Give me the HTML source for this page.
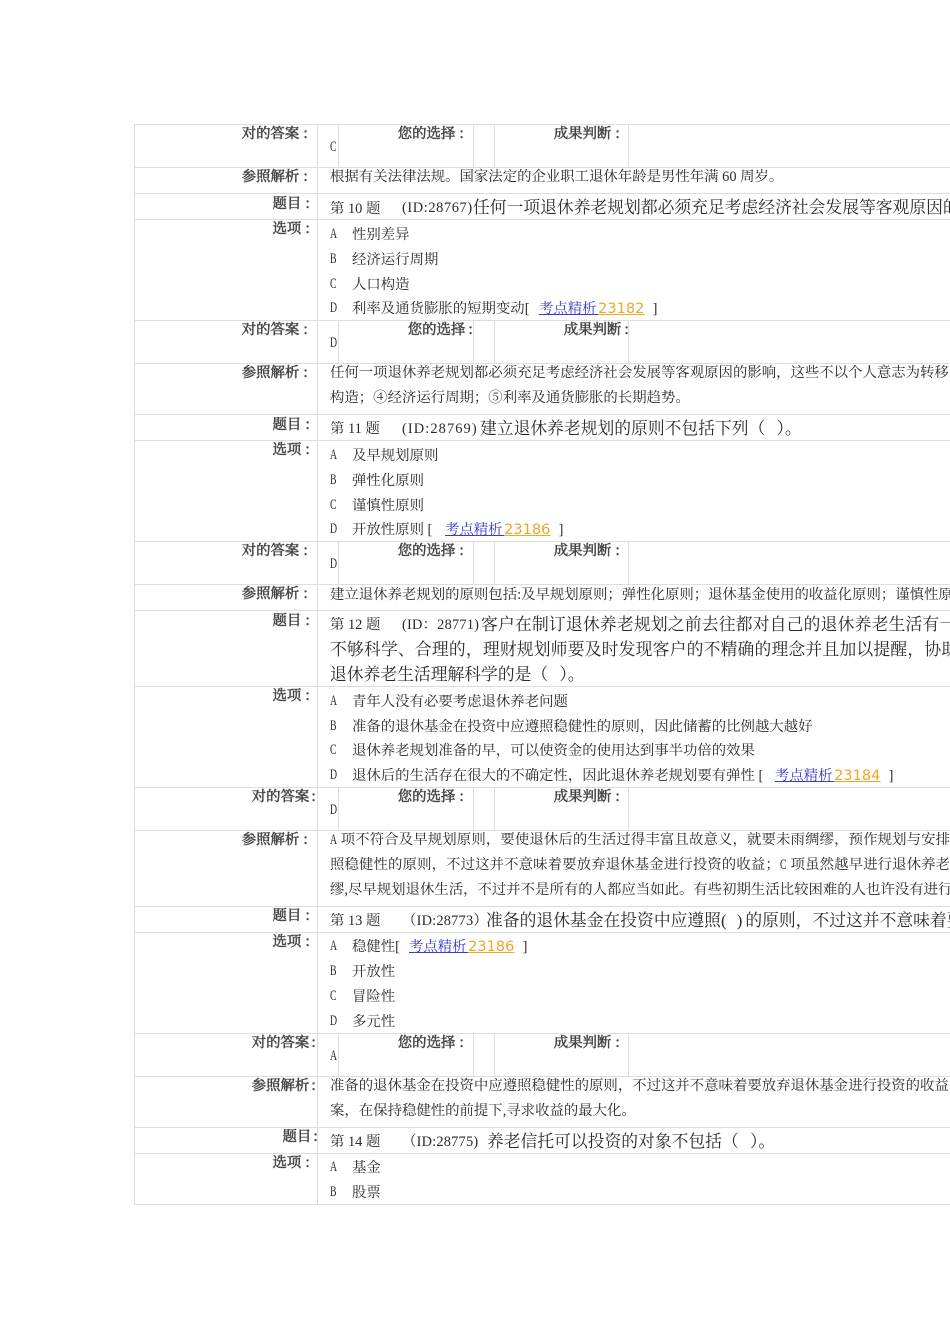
<!DOCTYPE html>
<html lang="zh"><head><meta charset="utf-8"><style>
html,body{margin:0;padding:0;background:#fff}
#p{position:relative;width:950px;height:1344px;overflow:hidden;background:#fff}
.h,.v{position:absolute;background:#dedede}
.h{left:134px;width:816px;height:1px}
.v{width:1px}
.l{position:absolute;height:20px;text-align:right;left:0;font:14.4px/20px "Noto Serif CJK SC",serif;-webkit-text-stroke:.5px #444;color:#444;white-space:nowrap}
.l i{font-style:normal;margin-left:4px}
.n i{margin-left:2px}
.r i{margin-left:3px}
.t{position:absolute;height:24px;line-height:24px;margin-top:2px;font-family:"Liberation Serif","Noto Serif CJK SC",serif;font-size:14.4px;color:#2a2a2a;white-space:nowrap}
.b{font-size:16.8px;margin-top:1px}
.d{letter-spacing:.6px;font-size:14.4px;margin-top:1px}
.c{margin-top:1px;transform:scaleX(.68);transform-origin:left center;font-size:14.4px}
.k{display:inline-block;width:7px;transform:scaleX(.68);transform-origin:left center}
.g{letter-spacing:7px}
a{color:#3c3ccc;text-decoration:underline;word-spacing:-2px}
a b{font:normal 14.5px "DejaVu Sans",sans-serif;color:#eba826;text-decoration:underline}
</style></head><body><div id="p">
<!-- horizontal lines -->
<div class="h" style="top:124px"></div><div class="h" style="top:167px"></div><div class="h" style="top:193px"></div><div class="h" style="top:219px"></div><div class="h" style="top:320px"></div><div class="h" style="top:363px"></div><div class="h" style="top:414px"></div><div class="h" style="top:440px"></div><div class="h" style="top:541px"></div><div class="h" style="top:584px"></div><div class="h" style="top:610px"></div><div class="h" style="top:686px"></div><div class="h" style="top:787px"></div><div class="h" style="top:830px"></div><div class="h" style="top:906px"></div><div class="h" style="top:932px"></div><div class="h" style="top:1033px"></div><div class="h" style="top:1076px"></div><div class="h" style="top:1127px"></div><div class="h" style="top:1153px"></div><div class="h" style="top:1204px"></div>
<!-- vertical lines -->
<div class="v" style="left:134px;top:124px;height:1081px"></div><div class="v" style="left:317px;top:124px;height:1081px"></div>
<div class="v" style="left:338px;top:124px;height:43px"></div><div class="v" style="left:473px;top:124px;height:43px"></div><div class="v" style="left:494px;top:124px;height:43px"></div><div class="v" style="left:628px;top:124px;height:43px"></div>
<div class="v" style="left:338px;top:320px;height:43px"></div><div class="v" style="left:473px;top:320px;height:43px"></div><div class="v" style="left:494px;top:320px;height:43px"></div><div class="v" style="left:628px;top:320px;height:43px"></div>
<div class="v" style="left:338px;top:541px;height:43px"></div><div class="v" style="left:473px;top:541px;height:43px"></div><div class="v" style="left:494px;top:541px;height:43px"></div><div class="v" style="left:628px;top:541px;height:43px"></div>
<div class="v" style="left:338px;top:787px;height:43px"></div><div class="v" style="left:473px;top:787px;height:43px"></div><div class="v" style="left:494px;top:787px;height:43px"></div><div class="v" style="left:628px;top:787px;height:43px"></div>
<div class="v" style="left:338px;top:1033px;height:43px"></div><div class="v" style="left:473px;top:1033px;height:43px"></div><div class="v" style="left:494px;top:1033px;height:43px"></div><div class="v" style="left:628px;top:1033px;height:43px"></div>
<!-- labels -->
<div class="l" style="top:123px;width:308px">对的答案<i>:</i></div><div class="l" style="top:123px;width:464px">您的选择<i>:</i></div><div class="l" style="top:123px;width:620px">成果判断<i>:</i></div>
<div class="l" style="top:166px;width:308px">参照解析<i>:</i></div>
<div class="l" style="top:193px;width:310px">题目<i>:</i></div>
<div class="l" style="top:218px;width:310px">选项<i>:</i></div>
<div class="l" style="top:319px;width:308px">对的答案<i>:</i></div><div class="l r" style="top:319px;width:473px">您的选择<i>:</i></div><div class="l r" style="top:319px;width:629px">成果判断<i>:</i></div>
<div class="l" style="top:362px;width:308px">参照解析<i>:</i></div>
<div class="l" style="top:414px;width:310px">题目<i>:</i></div>
<div class="l" style="top:439px;width:310px">选项<i>:</i></div>
<div class="l" style="top:540px;width:308px">对的答案<i>:</i></div><div class="l" style="top:540px;width:464px">您的选择<i>:</i></div><div class="l" style="top:540px;width:620px">成果判断<i>:</i></div>
<div class="l" style="top:583px;width:308px">参照解析<i>:</i></div>
<div class="l" style="top:610px;width:310px">题目<i>:</i></div>
<div class="l" style="top:685px;width:310px">选项<i>:</i></div>
<div class="l n" style="top:786px;width:316px">对的答案<i>:</i></div><div class="l" style="top:786px;width:464px">您的选择<i>:</i></div><div class="l" style="top:786px;width:620px">成果判断<i>:</i></div>
<div class="l" style="top:829px;width:308px">参照解析<i>:</i></div>
<div class="l" style="top:905px;width:310px">题目<i>:</i></div>
<div class="l" style="top:931px;width:310px">选项<i>:</i></div>
<div class="l n" style="top:1032px;width:316px">对的答案<i>:</i></div><div class="l" style="top:1032px;width:464px">您的选择<i>:</i></div><div class="l" style="top:1032px;width:620px">成果判断<i>:</i></div>
<div class="l n" style="top:1075px;width:316px">参照解析<i>:</i></div>
<div class="l n" style="top:1126px;width:318px">题目<i>:</i></div>
<div class="l" style="top:1152px;width:310px">选项<i>:</i></div>
<!-- answers -->
<div class="t c" style="left:330px;top:134px">C</div>
<div class="t c" style="left:330px;top:330px">D</div>
<div class="t c" style="left:330px;top:551px">D</div>
<div class="t c" style="left:330px;top:797px">D</div>
<div class="t c" style="left:330px;top:1043px">A</div>
<!-- Q10 -->
<div class="t" style="left:330px;top:163px">根据有关法律法规。国家法定的企业职工退休年龄是男性年满 60 周岁。</div>
<div class="t" style="left:330px;top:195px">第 10 题</div><div class="t d" style="left:402px;top:195px">(ID:28767)</div><div class="t b" style="left:473px;top:195px">任何一项退休养老规划都必须充足考虑经济社会发展等客观原因的影响</div>
<div class="t c" style="left:330px;top:221px">A</div><div class="t" style="left:352px;top:221px">性别差异</div>
<div class="t c" style="left:330px;top:246px">B</div><div class="t" style="left:352px;top:246px">经济运行周期</div>
<div class="t c" style="left:330px;top:271px">C</div><div class="t" style="left:352px;top:271px">人口构造</div>
<div class="t c" style="left:330px;top:295px">D</div><div class="t" style="left:352px;top:295px">利率及通货膨胀的短期变动[</div><div class="t" style="left:539px;top:295px"><a>考点精析 <b>23182</b></a></div><div class="t" style="left:649px;top:295px">&nbsp;]</div>
<!-- Q10 analysis -->
<div class="t" style="left:330px;top:359px">任何一项退休养老规划都必须充足考虑经济社会发展等客观原因的影响&#65292;这些不以个人意志为转移</div>
<div class="t" style="left:330px;top:384px">构造&#65307;④经济运行周期&#65307;⑤利率及通货膨胀的长期趋势。</div>
<!-- Q11 -->
<div class="t" style="left:330px;top:415px">第 11 题</div><div class="t d" style="left:402px;top:416px;letter-spacing:1.1px">(ID:28769)</div><div class="t b" style="left:480px;top:416px">建立退休养老规划的原则不包括下列&#65288;<span class="g"> </span>&#65289;。</div>
<div class="t c" style="left:330px;top:442px">A</div><div class="t" style="left:352px;top:442px">及早规划原则</div>
<div class="t c" style="left:330px;top:467px">B</div><div class="t" style="left:352px;top:467px">弹性化原则</div>
<div class="t c" style="left:330px;top:492px">C</div><div class="t" style="left:352px;top:492px">谨慎性原则</div>
<div class="t c" style="left:330px;top:516px">D</div><div class="t" style="left:352px;top:516px">开放性原则 [</div><div class="t" style="left:445px;top:516px"><a>考点精析 <b>23186</b></a></div><div class="t" style="left:555px;top:516px">&nbsp;]</div>
<div class="t" style="left:330px;top:581px">建立退休养老规划的原则包括:及早规划原则&#65307;弹性化原则&#65307;退休基金使用的收益化原则&#65307;谨慎性原则</div>
<!-- Q12 -->
<div class="t" style="left:330px;top:611px">第 12 题</div><div class="t d" style="left:402px;top:612px;letter-spacing:.2px">(ID&#65306;28771)</div><div class="t b" style="left:481px;top:612px;letter-spacing:.2px">客户在制订退休养老规划之前去往都对自己的退休养老生活有一</div>
<div class="t b" style="left:330px;top:637px;letter-spacing:.2px">不够科学、合理的&#65292;理财规划师要及时发现客户的不精确的理念并且加以提醒&#65292;协助</div>
<div class="t b" style="left:330px;top:662px">退休养老生活理解科学的是&#65288;<span class="g"> </span>&#65289;。</div>
<div class="t c" style="left:330px;top:688px">A</div><div class="t" style="left:352px;top:688px">青年人没有必要考虑退休养老问题</div>
<div class="t c" style="left:330px;top:713px">B</div><div class="t" style="left:352px;top:713px">准备的退休基金在投资中应遵照稳健性的原则&#65292;因此储蓄的比例越大越好</div>
<div class="t c" style="left:330px;top:737px">C</div><div class="t" style="left:352px;top:737px">退休养老规划准备的早&#65292;可以使资金的使用达到事半功倍的效果</div>
<div class="t c" style="left:330px;top:762px">D</div><div class="t" style="left:352px;top:762px">退休后的生活存在很大的不确定性&#65292;因此退休养老规划要有弹性 [</div><div class="t" style="left:775px;top:762px"><a>考点精析 <b>23184</b></a></div><div class="t" style="left:885px;top:762px">&nbsp;]</div>
<div class="t" style="left:330px;top:826px;letter-spacing:.12px"><span class="k">A</span> 项不符合及早规划原则&#65292;要使退休后的生活过得丰富且故意义&#65292;就要未雨绸缪&#65292;预作规划与安排</div>
<div class="t" style="left:330px;top:851px;letter-spacing:.12px">照稳健性的原则&#65292;不过这并不意味着要放弃退休基金进行投资的收益&#65307;<span class="k">C</span> 项虽然越早进行退休养老</div>
<div class="t" style="left:330px;top:876px">缪,尽早规划退休生活&#65292;不过并不是所有的人都应当如此。有些初期生活比较困难的人也许没有进行</div>
<!-- Q13 -->
<div class="t" style="left:330px;top:907px">第 13 题</div><div class="t d" style="left:402px;top:908px;letter-spacing:.2px">&#65288;ID:28773&#65289;</div><div class="t b" style="left:486px;top:908px">准备的退休基金在投资中应遵照<span style="letter-spacing:3px">( )</span>的原则&#65292;不过这并不意味着要</div>
<div class="t c" style="left:330px;top:933px">A</div><div class="t" style="left:352px;top:933px">稳健性[</div><div class="t" style="left:409px;top:933px"><a>考点精析 <b>23186</b></a></div><div class="t" style="left:519px;top:933px">&nbsp;]</div>
<div class="t c" style="left:330px;top:958px">B</div><div class="t" style="left:352px;top:958px">开放性</div>
<div class="t c" style="left:330px;top:983px">C</div><div class="t" style="left:352px;top:983px">冒险性</div>
<div class="t c" style="left:330px;top:1008px">D</div><div class="t" style="left:352px;top:1008px">多元性</div>
<div class="t" style="left:330px;top:1072px">准备的退休基金在投资中应遵照稳健性的原则&#65292;不过这并不意味着要放弃退休基金进行投资的收益</div>
<div class="t" style="left:330px;top:1097px">案&#65292;在保持稳健性的前提下,寻求收益的最大化。</div>
<!-- Q14 -->
<div class="t" style="left:330px;top:1128px">第 14 题</div><div class="t d" style="left:402px;top:1129px;letter-spacing:.2px">&#65288;ID:28775)</div><div class="t b" style="left:487px;top:1129px">养老信托可以投资的对象不包括&#65288;<span class="g"> </span>&#65289;。</div>
<div class="t c" style="left:330px;top:1154px">A</div><div class="t" style="left:352px;top:1154px">基金</div>
<div class="t c" style="left:330px;top:1179px">B</div><div class="t" style="left:352px;top:1179px">股票</div>
</div></body></html>
